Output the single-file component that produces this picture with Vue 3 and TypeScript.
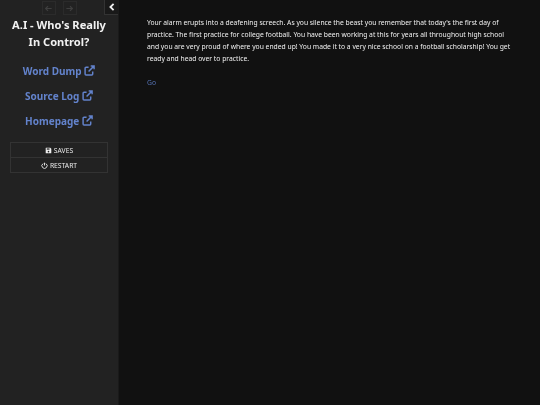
<script setup lang="ts">
const links = ['Word Dump', 'Source Log', 'Homepage']
</script>

<template>
  <div class="page">
    <aside class="side">
      <div class="hist">
        <span class="nav"><svg viewBox="0 0 10 10" class="arrow"><path d="M8.500 5H2M4.500 2.300 1.800 5l2.700 2.700" /></svg></span>
        <span class="nav"><svg viewBox="0 0 10 10" class="arrow"><path d="M1.500 5H8M5.500 2.300 8.200 5 5.500 7.700" /></svg></span>
      </div>
      <button class="toggle"><svg viewBox="0 0 10 10"><path d="M6.600 1.800 3.400 5l3.200 3.200" /></svg></button>
      <h1 class="title soft">A.I - Who's Really In Control?</h1>
      <nav class="links soft">
        <a v-for="l in links" :key="l" class="link">{{ l }}
          <svg viewBox="0 0 12 12" class="ext"><path d="M9.500 7v2.800a1 1 0 0 1-1 1H2.200a1 1 0 0 1-1-1V3.500a1 1 0 0 1 1-1H5" /><path d="M5 7 10.500 1.500M7.300 1h3.700v3.700" /></svg>
        </a>
      </nav>
      <div class="menu">
        <div class="item">
          <span class="soft row">
            <svg viewBox="0 0 10 10" class="mi"><path fill="#eee" d="M1.500 1h6L9 2.500v6a.5.5 0 0 1-.5.5h-7a.5.5 0 0 1-.5-.5v-7a.5.5 0 0 1 .5-.5Z" /><rect x="2.500" y="2" width="4" height="1.800" fill="#222" /><circle cx="5" cy="6.500" r="1.200" fill="#222" /></svg>
            SAVES
          </span>
        </div>
        <div class="item">
          <span class="soft row">
            <svg viewBox="0 0 10 10" class="mi pw"><path d="M3 2.300a3.700 3.700 0 1 0 4 0M5 1v4" /></svg>
            RESTART
          </span>
        </div>
      </div>
    </aside>
    <main class="main">
      <p class="soft">Your alarm erupts into a deafening screech. As you silence the beast you remember that today's the first day of practice. The first practice for college football. You have been working at this for years all throughout high school and you are very proud of where you ended up! You made it to a very nice school on a football scholarship! You get ready and head over to practice.</p>
      <p class="soft"><a class="go">Go</a></p>
    </main>
  </div>
</template>

<style>
html, body { margin: 0; background: #111; }
</style>

<style scoped>
.page {
  display: flex;
  width: 540px;
  height: 405px;
  overflow: hidden;
  font-family: "Noto Sans", sans-serif;
  background: #111;
  color: #eee;
}
.soft { filter: blur(0.2px); }
.side {
  position: relative;
  box-sizing: border-box;
  width: 119px;
  flex: none;
  background: #222;
  border-right: 1px solid #1a1a1a;
  padding: 1px 10px 0;
  text-align: center;
}
.hist {
  display: flex;
  justify-content: center;
  gap: 7px;
  height: 15px;
}
.nav {
  display: flex;
  align-items: center;
  justify-content: center;
  width: 14px;
  height: 14px;
  box-sizing: border-box;
  border: 1px solid #2b2b2b;
}
.arrow { width: 9px; height: 9px; fill: none; stroke: #3f3f3f; stroke-width: 1.300; }
.toggle {
  position: absolute;
  top: 0;
  right: 0;
  width: 14px;
  height: 15px;
  padding: 0;
  display: flex;
  align-items: center;
  justify-content: center;
  background: #191919;
  border: 1px solid #333;
  border-right: 0;
  border-top: 0;
}
.toggle svg { width: 10px; height: 10px; fill: none; stroke: #eee; stroke-width: 1.800; }
.title {
  margin: 0;
  font-size: 11.100px;
  line-height: 17px;
  font-weight: 700;
  color: #f2f2f2;
}
.links {
  display: flex;
  flex-direction: column;
  gap: 9px;
  margin-top: 13px;
}
.link {
  font-size: 10px;
  line-height: 16px;
  font-weight: 700;
  color: #6383cc;
  white-space: nowrap;
}
.ext {
  width: 11px;
  height: 11px;
  vertical-align: -1px;
  fill: none;
  stroke: #6383cc;
  stroke-width: 1.600;
}
.menu {
  margin-top: 13px;
  border: 1px solid #333;
}
.item {
  display: flex;
  align-items: center;
  justify-content: center;
  height: 14px;
  font-size: 6.750px;
  color: #e8e8e8;
}
.row { display: flex; align-items: center; gap: 2px; }
.item + .item { border-top: 1px solid #333; }
.mi { width: 7px; height: 7px; }
.pw { fill: none; stroke: #eee; stroke-width: 1.300; }
.main {
  flex: 1;
  padding: 17px 28px 0;
  font-size: 6.750px;
  line-height: 12px;
  color: #f0f0f0;
}
.main p { margin: 0 0 11.500px; }
.go { color: #5572b4; }
</style>
